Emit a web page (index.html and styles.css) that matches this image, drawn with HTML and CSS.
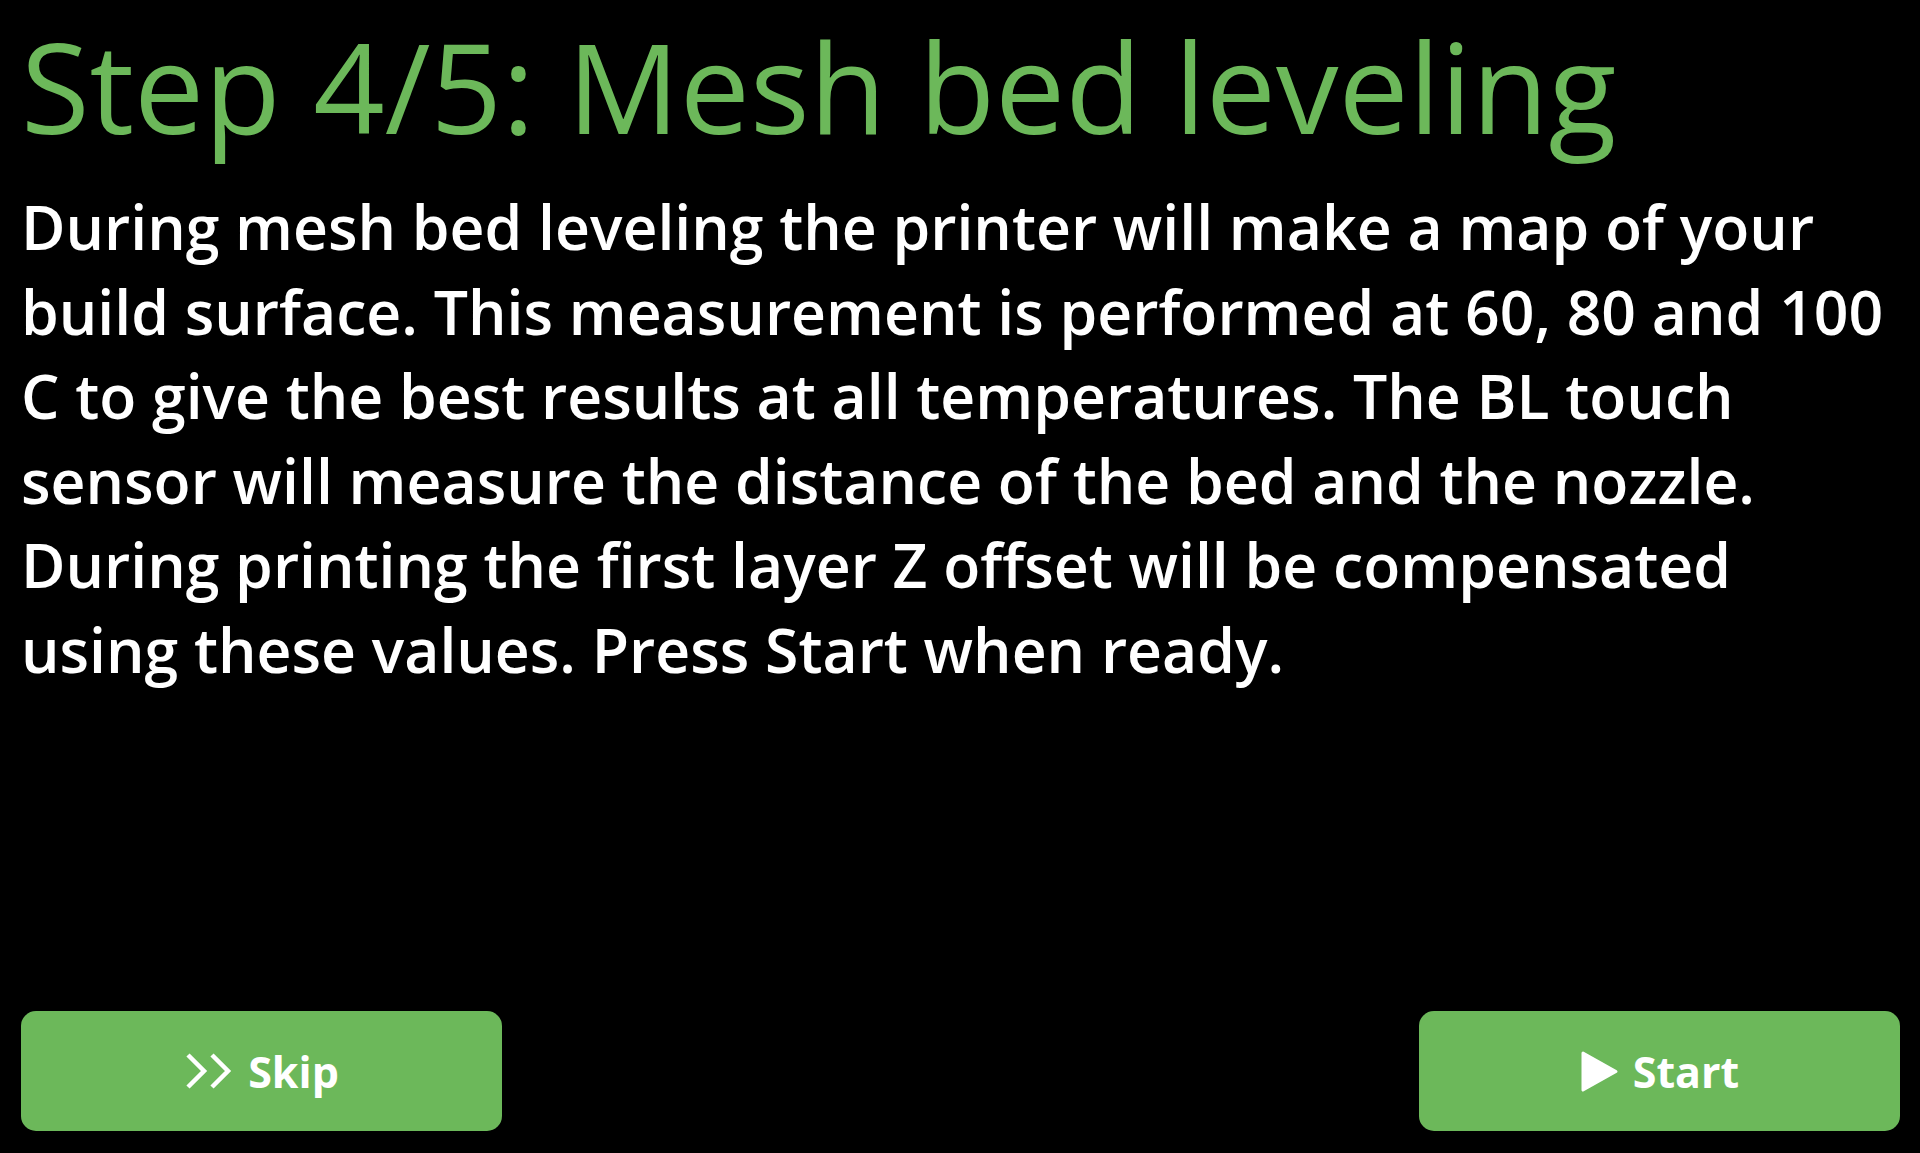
FILE: index.html
```html
<!DOCTYPE html>
<html>
<head>
<meta charset="utf-8">
<link rel="stylesheet" href="styles.css">
</head>
<body>
<div class="screen">
  <h1 class="title">Step 4/5: Mesh bed leveling</h1>
  <p class="desc">During mesh bed leveling the printer will make a map of your build surface. This measurement is performed at 60, 80 and 100 C to give the best results at all temperatures. The BL touch sensor will measure the distance of the bed and the nozzle. During printing the first layer Z offset will be compensated using these values. Press Start when ready.</p>
  <div class="spacer"></div>
  <div class="actions">
    <button class="btn">
      <svg class="icon" viewBox="0 0 50 38" width="50" height="38"><path d="M4 3 L20 19 L4 35 M28 3 L44 19 L28 35" fill="none" stroke="#fff" stroke-width="4.5" stroke-linejoin="miter" stroke-linecap="butt"/></svg>
      <span>Skip</span>
    </button>
    <button class="btn">
      <svg class="icon" viewBox="0 0 39 43" width="39" height="43"><path d="M3 3 L36 21.5 L3 40 Z" fill="#fff" stroke="#fff" stroke-width="3" stroke-linejoin="round"/></svg>
      <span>Start</span>
    </button>
  </div>
</div>
</body>
</html>
```
FILE: styles.css
```css
html, body {
  margin: 0;
  padding: 0;
  background: #000;
}
.screen {
  height: 1153px;
  box-sizing: border-box;
  display: flex;
  flex-direction: column;
  padding: 0 20px 22px 21px;
  font-family: "Open Sans", "DejaVu Sans", sans-serif;
}
.title {
  margin: 0;
  color: #6cb85a;
  font-weight: 500;
  font-size: 125px;
  line-height: 171px;
}
.desc {
  margin: 14px 0 0;
  max-width: 1866px;
  color: #fff;
  font-weight: 600;
  font-size: 60.7px;
  line-height: 84.5px;
}
.spacer { flex: 1; }
.actions {
  display: flex;
  justify-content: space-between;
}
.btn {
  width: 481px;
  height: 120px;
  border: none;
  border-radius: 15px;
  background: #6cb85a;
  color: #fff;
  font-family: inherit;
  font-weight: 700;
  font-size: 43px;
  display: flex;
  align-items: center;
  justify-content: center;
  gap: 14px;
  padding: 0;
}
.icon { display: block; }
```
